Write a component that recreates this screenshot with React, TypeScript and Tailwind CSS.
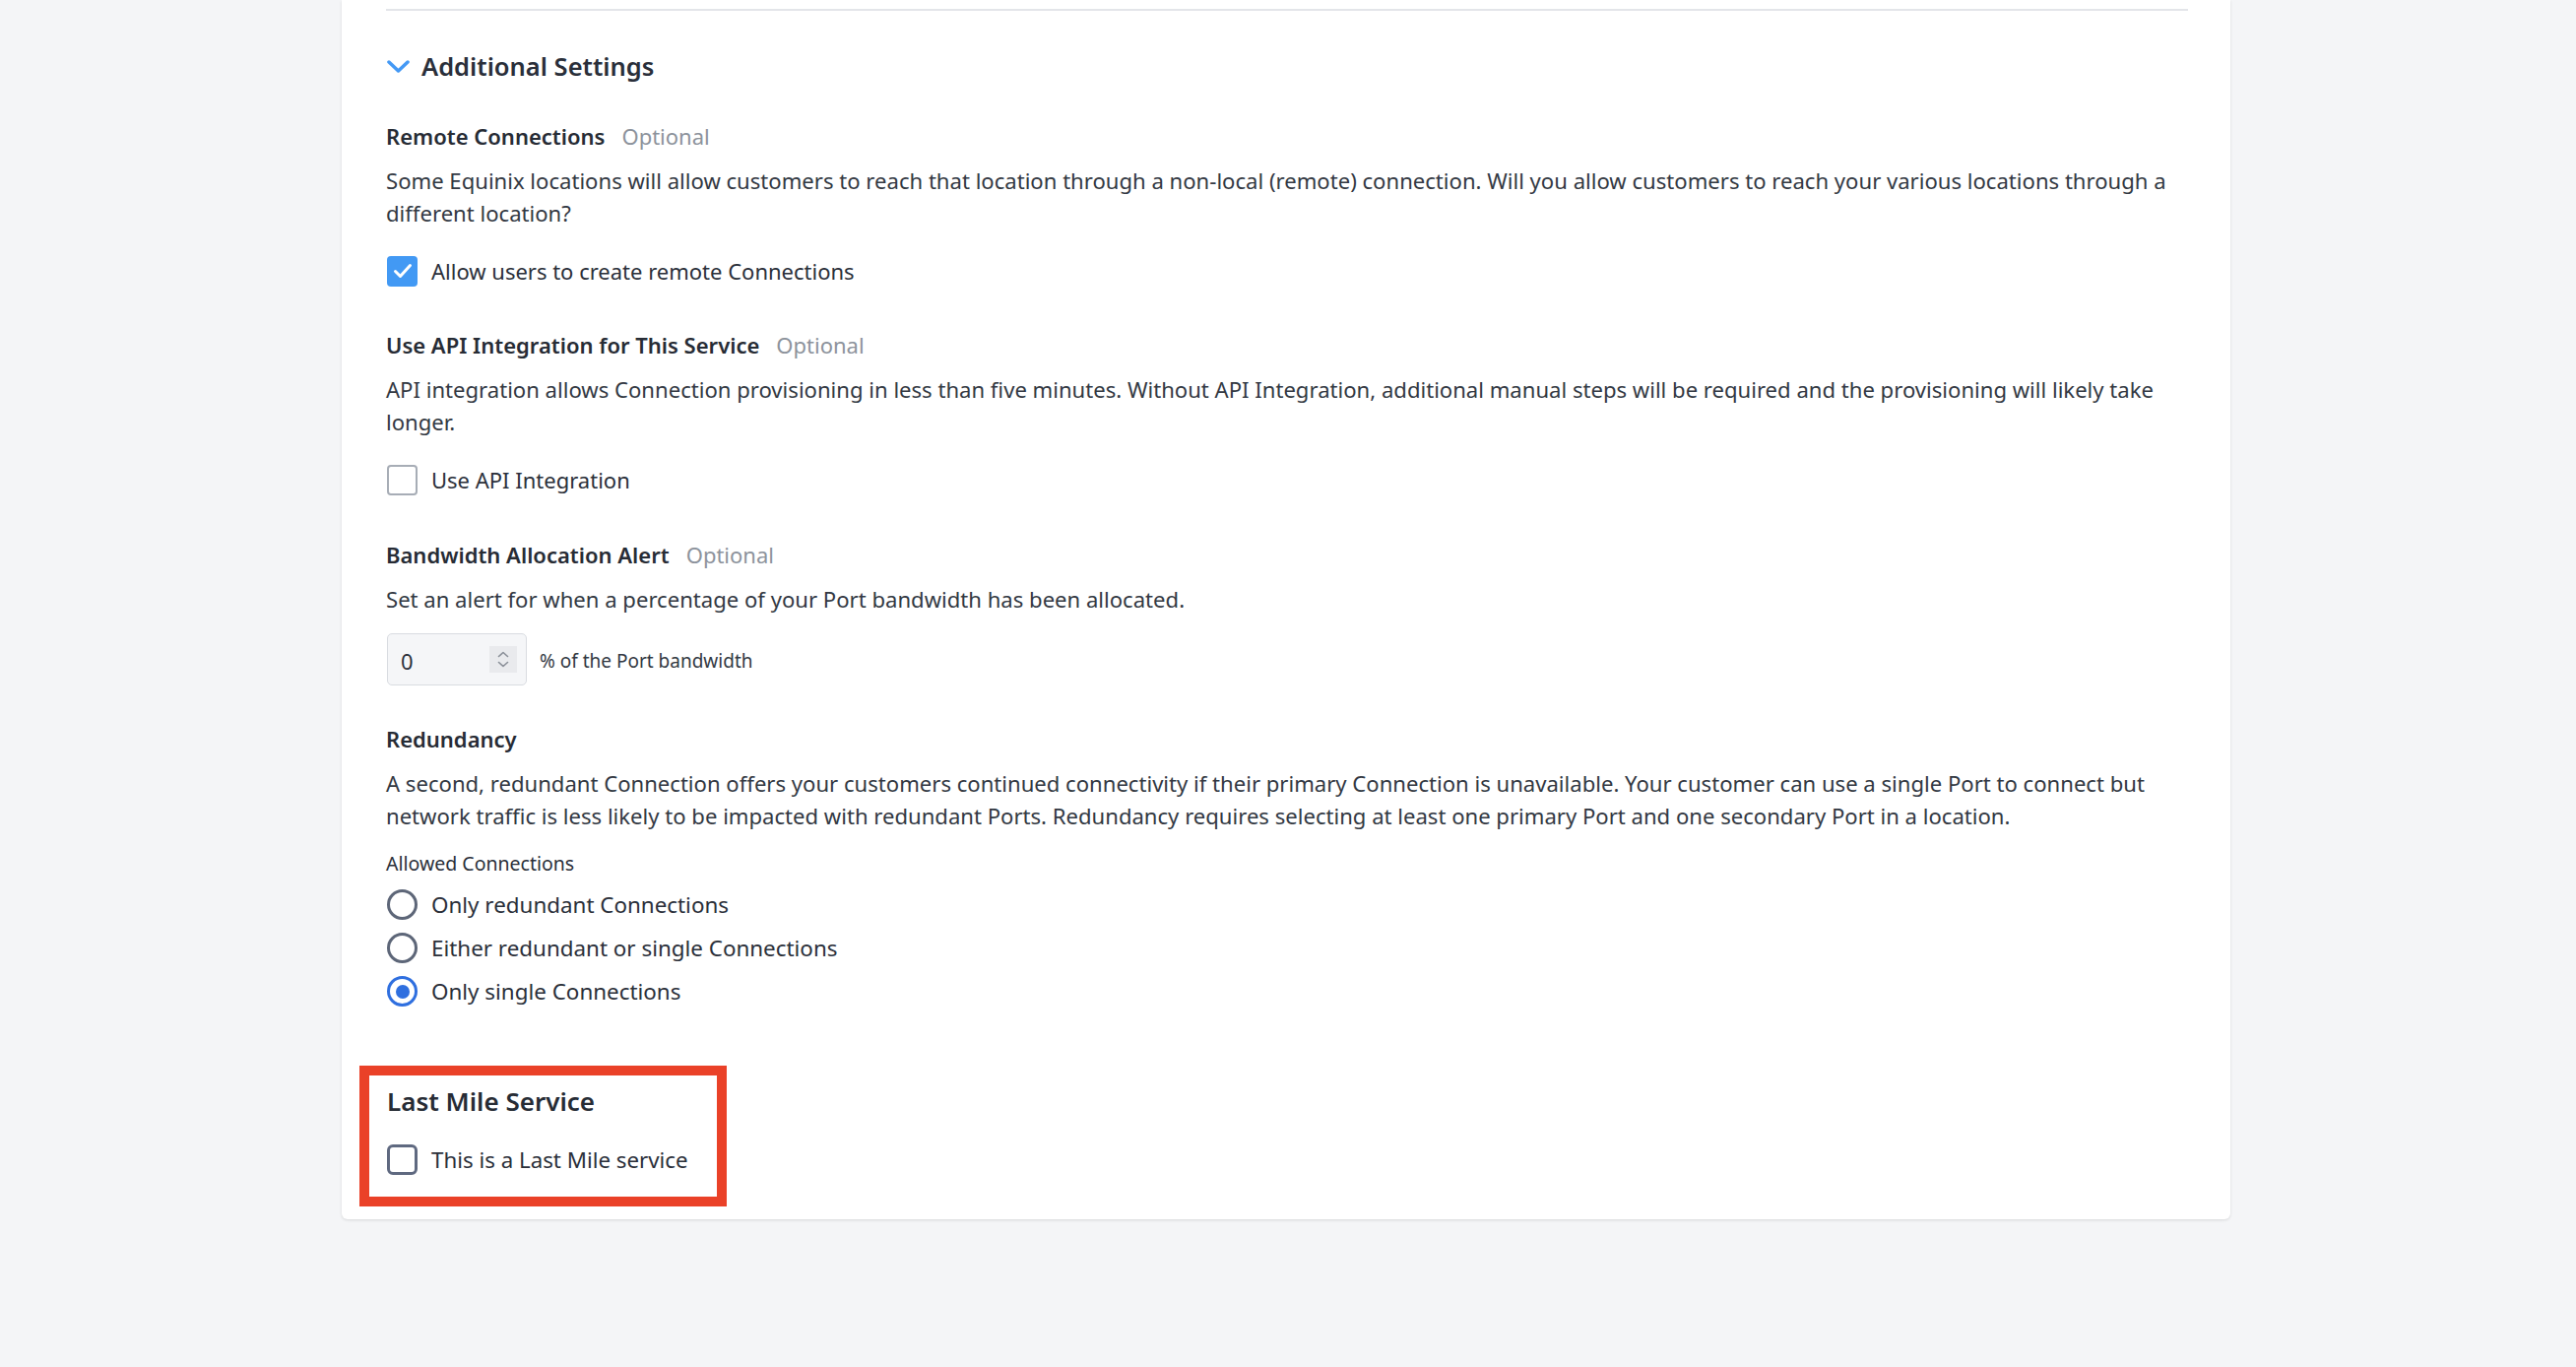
import React from 'react';

const FONT = { fontFamily: '"Noto Sans", "Open Sans", sans-serif' };

function Label({ title, optional }: { title: string; optional?: boolean }) {
  return (
    <div className="flex items-center text-[22px] leading-[33px]">
      <span className="font-semibold text-[#272c35]">{title}</span>
      {optional && <span className="ml-[17px] text-[#8d939c]">Optional</span>}
    </div>
  );
}

function Checkbox({ checked, label, dark }: { checked?: boolean; label: string; dark?: boolean }) {
  return (
    <label className={`flex items-center h-[33px] text-[#2b303a] ${dark ? 'text-[22.3px]' : 'text-[22px]'}`}>
      {checked ? (
        <span className="w-[31px] h-[31px] rounded-[4px] bg-[#4299f4] flex items-center justify-center">
          <svg width="20" height="16" viewBox="0 0 20 16" fill="none">
            <path d="M2.5 8.5 L7.5 13.5 L17.5 2.5" stroke="white" strokeWidth="3" strokeLinecap="round" strokeLinejoin="round" />
          </svg>
        </span>
      ) : (
        <span
          className={
            dark
              ? 'w-[31px] h-[31px] rounded-[6px] border-[3.5px] border-[#5f6980] bg-white'
              : 'w-[31px] h-[31px] rounded-[4px] border-[2px] border-[#a7adb6] bg-white'
          }
        />
      )}
      <span className="ml-[14px]">{label}</span>
    </label>
  );
}

function Radio({ checked, label }: { checked?: boolean; label: string }) {
  return (
    <label className="flex items-center h-[44px] text-[22.4px] text-[#2b303a]">
      {checked ? (
        <span className="w-[31px] h-[31px] rounded-full border-[3px] border-[#2f6fdf] flex items-center justify-center">
          <span className="w-[14px] h-[14px] rounded-full bg-[#2f6fdf]" />
        </span>
      ) : (
        <span className="w-[31px] h-[31px] rounded-full border-[3px] border-[#5d6678]" />
      )}
      <span className="ml-[14px]">{label}</span>
    </label>
  );
}

export default function App() {
  return (
    <div className="min-h-[1388px] w-full bg-[#f4f5f7]" style={FONT}>
      <div className="ml-[347px] w-[1918px] bg-white rounded-b-[6px] shadow-[0_1px_3px_rgba(0,0,0,0.12)] pl-[45px] pr-[43px] pt-[9px] pb-[13px]">
        <div className="h-[2px] bg-[#e3e5e9]" />

        {/* Additional settings header */}
        <div className="mt-[38px] flex items-center h-[36px]">
          <svg width="23" height="13" viewBox="0 0 23 13" fill="none" className="ml-[1px]">
            <path d="M2 2 L11.5 11 L21 2" stroke="#4499f5" strokeWidth="3.5" strokeLinecap="round" strokeLinejoin="round" />
          </svg>
          <span className="ml-[12px] text-[25.5px] font-semibold text-[#2a2f3a]">Additional Settings</span>
        </div>

        {/* Remote connections */}
        <div className="mt-[37px]">
          <Label title="Remote Connections" optional />
          <p className="mt-[12px] text-[22.1px] leading-[33.4px] text-[#333943]">
            Some Equinix locations will allow customers to reach that location through a non-local (remote) connection. Will you allow customers to reach your various locations through a different location?
          </p>
          <div className="mt-[25px] ml-[1px]">
            <Checkbox checked label="Allow users to create remote Connections" />
          </div>
        </div>

        {/* API integration */}
        <div className="mt-[42px]">
          <Label title="Use API Integration for This Service" optional />
          <p className="mt-[12px] text-[22.1px] leading-[33.4px] text-[#333943]">
            API integration allows Connection provisioning in less than five minutes. Without API Integration, additional manual steps will be required and the provisioning will likely take longer.
          </p>
          <div className="mt-[25px] ml-[1px]">
            <Checkbox label="Use API Integration" />
          </div>
        </div>

        {/* Bandwidth alert */}
        <div className="mt-[43px]">
          <Label title="Bandwidth Allocation Alert" optional />
          <p className="mt-[12px] text-[22.1px] leading-[33.4px] text-[#333943]">
            Set an alert for when a percentage of your Port bandwidth has been allocated.
          </p>
          <div className="mt-[18px] ml-[1px] flex items-center">
            <div className="w-[142px] h-[53px] rounded-[5px] border-[1.5px] border-[#d9dce1] bg-[#f5f6f8] flex items-center justify-between pl-[13px] pr-[9px]">
              <span className="mt-[4px] text-[22px] text-[#2b303a]">0</span>
              <span className="w-[28px] h-[27px] bg-[#e9eaed] flex flex-col items-center justify-center gap-[3px]">
                <svg width="12" height="7" viewBox="0 0 12 7" fill="none">
                  <path d="M1.5 5.5 L6 1.5 L10.5 5.5" stroke="#8b9099" strokeWidth="1.6" strokeLinecap="round" strokeLinejoin="round" />
                </svg>
                <svg width="12" height="7" viewBox="0 0 12 7" fill="none">
                  <path d="M1.5 1.5 L6 5.5 L10.5 1.5" stroke="#8b9099" strokeWidth="1.6" strokeLinecap="round" strokeLinejoin="round" />
                </svg>
              </span>
            </div>
            <span className="ml-[13px] mt-[4px] text-[19px] text-[#333943]">% of the Port bandwidth</span>
          </div>
        </div>

        {/* Redundancy */}
        <div className="mt-[38px]">
          <Label title="Redundancy" />
          <p className="mt-[12px] text-[22.1px] leading-[33.4px] text-[#333943]">
            A second, redundant Connection offers your customers continued connectivity if their primary Connection is unavailable. Your customer can use a single Port to connect but network traffic is less likely to be impacted with redundant Ports. Redundancy requires selecting at least one primary Port and one secondary Port in a location.
          </p>
          <div className="mt-[17px] text-[19.5px] leading-[28px] text-[#2b303a]">Allowed Connections</div>
          <div className="mt-[6px] ml-[1px] flex flex-col">
            <Radio label="Only redundant Connections" />
            <Radio label="Either redundant or single Connections" />
            <Radio checked label="Only single Connections" />
          </div>
        </div>

        {/* Last mile service, outlined */}
        <div className="mt-[53px] -ml-[27px] w-[373px] border-[10px] border-[#ea4128] pl-[18px] pt-[8px] pb-[21px]">
          <div className="text-[26px] leading-[37px] font-semibold text-[#272c35]">Last Mile Service</div>
          <div className="mt-[24px]">
            <Checkbox dark label="This is a Last Mile service" />
          </div>
        </div>
      </div>
    </div>
  );
}
